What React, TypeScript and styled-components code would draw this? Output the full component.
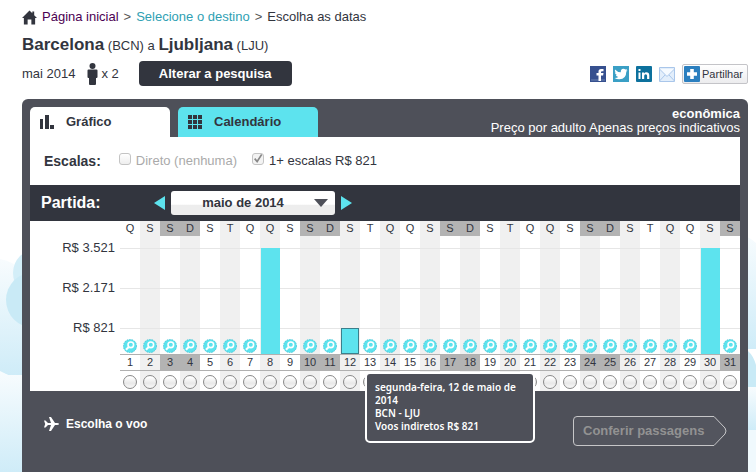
import React, { useState } from "react";
import styled, { createGlobalStyle, css } from "styled-components";

const ink = "#32353e";
const slate = "#4e5059";
const aqua = "#5de3ee";
const weekendGrey = "#b3b3b3";
const stripe = "#f0f0f0";

const GlobalStyle = createGlobalStyle`
  * { box-sizing: border-box; }
  html, body { margin: 0; height: 100%; overflow: hidden; }
  #root { min-height: 100%; height: 100%; }
  body {
    background: #fff;
    color: ${ink};
    font-family: "Liberation Sans", Arial, Helvetica, sans-serif;
    font-size: 13px;
    line-height: 16px;
  }
  button, input, select { font: inherit; color: inherit; margin: 0; }
  h1, h2, p { margin: 0; font: inherit; }
`;

const Page = styled.div`
  position: relative;
  min-height: 100%;
  padding: 0 8px 0 22px;
  display: flex;
  flex-direction: column;
`;

const CloudLayer = styled.svg<{ $side: "left" | "right" }>`
  position: absolute;
  top: 225px;
  ${(p) => p.$side}: 0;
`;

const Breadcrumb = styled.nav`
  display: flex;
  align-items: center;
  gap: 5px;
  padding-top: 9px;
  color: #555;
`;

const Crumb = styled.a<{ $tone: string }>`
  color: ${(p) => p.$tone};
  text-decoration: none;
`;

const Route = styled.h1`
  padding-top: 10px;
  line-height: 20px;
  strong { font-size: 17px; }
`;

const SearchBar = styled.div`
  display: flex;
  align-items: center;
  height: 25px;
  margin-top: 5px;
`;

const Passengers = styled.span`
  display: flex;
  align-items: center;
  gap: 3px;
  margin-left: 12px;
`;

const ChangeButton = styled.button`
  height: 25px;
  margin-left: 20px;
  padding: 0 20px;
  border: 0;
  border-radius: 4px;
  background: ${ink};
  color: #fff;
  font-weight: bold;
`;

const ShareTools = styled.div`
  display: flex;
  align-items: center;
  gap: 7px;
  margin-left: auto;
`;

const SocialLink = styled.a`
  display: flex;
`;

const ShareButton = styled.button`
  display: flex;
  align-items: center;
  gap: 2px;
  height: 20px;
  padding: 0 4px 0 1px;
  border: 1px solid #c4c4c8;
  border-radius: 2px;
  background: linear-gradient(#fff, #ececee);
  font-size: 11px;
`;

const Panel = styled.main`
  position: relative;
  flex: 1;
  margin-top: 13px;
  padding: 8px 8px 0;
  border-radius: 6px 6px 0 0;
  background: ${slate};
`;

const PanelHead = styled.div`
  display: flex;
  align-items: flex-start;
`;

const Tabs = styled.div`
  display: flex;
  gap: 8px;
`;

const Tab = styled.button<{ $active: boolean }>`
  display: flex;
  align-items: center;
  gap: 12px;
  width: 140px;
  height: 30px;
  padding: 0 10px;
  border: 0;
  border-radius: 5px 5px 0 0;
  background: ${(p) => (p.$active ? "#fff" : aqua)};
  font-weight: bold;
`;

const PriceNote = styled.p`
  margin-left: auto;
  color: #fff;
  line-height: 14px;
  text-align: right;
  strong { display: block; }
`;

const Stops = styled.fieldset`
  display: flex;
  align-items: center;
  height: 48px;
  margin: 0;
  padding: 0 14px;
  border: 0;
  background: #fff;
`;

const StopsTitle = styled.span`
  margin-right: 3px;
  font-size: 14px;
  font-weight: bold;
`;

const StopOption = styled.label<{ $muted?: boolean }>`
  display: flex;
  align-items: center;
  gap: 5px;
  margin-left: 15px;
  color: ${(p) => (p.$muted ? "#aaa" : ink)};
`;

const CheckInput = styled.input`
  appearance: none;
  align-self: flex-start;
  width: 12px;
  height: 12px;
  border: 1px solid #c4c4c4;
  border-radius: 3px;
  background: linear-gradient(#fff, #eee);
  &:checked {
    background: url("data:image/svg+xml,%3Csvg xmlns='http://www.w3.org/2000/svg' viewBox='0 0 12 12'%3E%3Cpath d='M2 5.5 5 9 10.5 0.5' fill='none' stroke='%23888' stroke-width='2'/%3E%3C/svg%3E") center / 100% no-repeat, #f3f3f3;
  }
`;

const Departure = styled.div`
  display: flex;
  align-items: center;
  height: 36px;
  padding: 0 11px;
  background: ${ink};
`;

const DepartureTitle = styled.h2`
  width: 113px;
  color: #fff;
  font-size: 16px;
  font-weight: bold;
`;

const StepButton = styled.button`
  display: flex;
  padding: 0;
  border: 0;
  background: none;
`;

const MonthBox = styled.div`
  display: grid;
  align-items: center;
  width: 164px;
  margin: 0 6px;
  & > * { grid-area: 1 / 1; }
  svg { justify-self: end; margin-right: 7px; pointer-events: none; }
`;

const MonthSelect = styled.select`
  appearance: none;
  width: 100%;
  height: 24px;
  padding: 0 20px 0 0;
  border: 0;
  border-radius: 3px;
  background: linear-gradient(#fff 0 55%, #ededed 60% 100%);
  font-weight: bold;
  text-align: center;
  text-align-last: center;
`;

const Chart = styled.section`
  display: grid;
  grid-template-columns: 90px 1fr;
  background: #fff;
`;

const PriceAxis = styled.div`
  display: flex;
  flex-direction: column;
  padding: 7px 5px 0 0;
  text-align: right;
`;

const PriceMark = styled.span`
  height: 40px;
  line-height: 40px;
`;

const Days = styled.div`
  display: grid;
  grid-template-columns: repeat(31, 1fr);
`;

const Day = styled.div`
  display: flex;
  flex-direction: column;
  font-size: 11px;
  text-align: center;
  &:nth-child(even) { background: ${stripe}; }
`;

const weekendFill = css<{ $weekend: boolean }>`
  ${(p) => p.$weekend && `background: ${weekendGrey};`}
`;

const WeekLetter = styled.span<{ $weekend: boolean }>`
  height: 15px;
  line-height: 15px;
  ${weekendFill}
`;

const Plot = styled.div`
  display: flex;
  align-items: flex-end;
  justify-content: center;
  height: 118px;
  background: linear-gradient(#e6e6e6 1px, transparent 1px) 0 12px / 100% 40px;
`;

const Bar = styled.button<{ $selected: boolean }>`
  width: 100%;
  margin-left: 1px;
  margin-right: ${(p) => (p.$selected ? "1px" : "0")};
  padding: 0;
  border: ${(p) => (p.$selected ? "1px solid #3b7f8c" : "0")};
  background: ${aqua};
`;

const SearchDay = styled.button`
  display: flex;
  padding: 0 0 1px;
  border: 0;
  background: none;
`;

const DayNumber = styled.span<{ $weekend: boolean }>`
  height: 17px;
  border: solid #b0b0b0;
  border-width: 1px 0;
  line-height: 15px;
  ${weekendFill}
`;

const DayChoice = styled.input`
  appearance: none;
  align-self: center;
  width: 14px;
  height: 14px;
  margin: 4px 0 2px;
  border: 1px solid #888;
  border-radius: 50%;
  background: linear-gradient(#fff 10%, #e8e8e8 60%, #f8f8f8);
`;

const Tooltip = styled.div`
  position: absolute;
  top: 273px;
  left: 343px;
  width: 170px;
  padding: 7px 8px 8px;
  border: 2px solid #fff;
  border-radius: 5px;
  background: ${slate};
  color: #fff;
  font-family: "Noto Sans", sans-serif;
  font-size: 10px;
  font-weight: 600;
  line-height: 13px;
`;

const PanelFoot = styled.footer`
  display: flex;
  align-items: flex-start;
  justify-content: space-between;
  padding: 25px 13px 0 14px;
`;

const FlightPick = styled.div`
  display: flex;
  align-items: center;
  gap: 7px;
  color: #fff;
  font-size: 12px;
  font-weight: bold;
`;

const CheckFares = styled.button`
  display: grid;
  align-items: center;
  padding: 0;
  border: 0;
  background: none;
  color: #929292;
  font-weight: bold;
  & > * { grid-area: 1 / 1; }
  span { justify-self: start; padding-left: 10px; }
`;

const HomeIcon = () => (
  <svg width="15" height="15" viewBox="0 0 16 15" fill={ink} aria-hidden="true">
    <path d="M8 0 0 8h2v7h4V9.500h4V15h4V8h2L13 5V1h-2v2z" />
  </svg>
);

const PersonIcon = () => (
  <svg width="11" height="22" viewBox="0 0 11 22" fill={ink} aria-hidden="true">
    <circle cx="5.500" cy="3" r="3" />
    <path d="M1.500 6.500h8q1 0 1 1V14q0 1-1 1H9v6q0 1-1 1H3q-1 0-1-1v-6h-.5q-1 0-1-1V7.500q0-1 1-1z" />
  </svg>
);

const FacebookIcon = () => (
  <svg width="16" height="16" viewBox="0 0 16 16" aria-hidden="true">
    <rect width="16" height="16" fill="#36508f" />
    <path d="M1 14h14" stroke="#6d84b4" />
    <path d="M8.500 15V9.500H6.500V7h2V5.500Q8.500 3 11 3h2.500v2.300H12q-1 0-1 1V7h2.500l-.4 2.500H11V15z" fill="#fff" />
  </svg>
);

const TwitterIcon = () => (
  <svg width="16" height="16" viewBox="0 0 16 16" aria-hidden="true">
    <rect width="16" height="16" fill="#3a9fc5" />
    <path d="M2 3.500Q4.500 6.300 7.800 6.300 7.500 3 10.400 2.800q1.300 0 2 .8L14 3l-.8 1.500L14.500 4.300 13.300 5.700Q13.300 12.800 6.500 13.300 3.700 13.400 1.500 12q2.400.1 3.800-1.100Q3.300 10.600 2.800 9h1.200Q2 8.200 1.900 6.200l1.100.3Q1.200 5.300 2 3.500z" fill="#fff" />
  </svg>
);

const LinkedInIcon = () => (
  <svg width="16" height="16" viewBox="0 0 16 16" aria-hidden="true">
    <rect width="16" height="16" rx="1" fill="#0d719d" />
    <path d="M2.500 6.500h2V13h-2zM2.500 3h2v2h-2zM6 6.500h2v1q.8-1.200 2.300-1.200 3 0 3 3.200V13h-2.200V9.700q0-1.500-1.400-1.500-1.500 0-1.500 1.600V13H6z" fill="#fff" />
  </svg>
);

const MailIcon = () => (
  <svg width="16" height="16" viewBox="0 0 16 16" fill="#e2eefb" stroke="#a9c6ea" aria-hidden="true">
    <path d="M.5 1.500h15v14H.5z" />
    <path d="m.5 15 5.500-6m9.500 6L10 9" />
    <path d="M.5 3 8 10.500 15.500 3" fill="#f5faff" />
  </svg>
);

const PlusIcon = () => (
  <svg width="16" height="16" viewBox="0 0 16 16" aria-hidden="true">
    <rect width="16" height="16" rx="1" fill="#2b7fbf" />
    <path d="M6.200 3h3.600v3.200H13v3.600H9.800V13H6.200V9.800H3V6.200h3.200z" fill="#fff" />
  </svg>
);

const BarsIcon = () => (
  <svg width="14" height="14" viewBox="0 0 14 14" fill={ink} aria-hidden="true">
    <path d="M0 4h3v10H0zM5 0h4v14H5zM10 10h4v4h-4z" />
  </svg>
);

const GridIcon = () => (
  <svg width="14" height="14" viewBox="0 0 14 14" fill={ink} aria-hidden="true">
    <path d="M0 0h4v4H0zM5 0h4v4H5zM10 0h4v4h-4zM0 5h4v4H0zM5 5h4v4H5zM10 5h4v4h-4zM0 10h4v4H0zM5 10h4v4H5zM10 10h4v4h-4z" />
  </svg>
);

const StepIcon = ({ back }: { back?: boolean }) => (
  <svg width="11" height="14" viewBox="0 0 11 14" fill={aqua} aria-hidden="true">
    <path d={back ? "M11 0v14L0 7z" : "M0 0v14l11-7z"} />
  </svg>
);

const MagnifierIcon = () => (
  <svg width="14" height="14" viewBox="0 0 14 14" aria-hidden="true">
    <circle cx="7" cy="7" r="6.600" fill={aqua} stroke="#3cc0d2" strokeWidth=".8" strokeDasharray="1.500 1" />
    <circle cx="7.800" cy="5.800" r="2.800" fill="none" stroke="#fff" strokeWidth="1.600" />
    <path d="M5.700 8 3 10.800" stroke="#fff" strokeWidth="2" />
  </svg>
);

const PlaneIcon = () => (
  <svg width="15" height="16" viewBox="0 0 15 16" fill="#fff" aria-hidden="true">
    <path d="M0 4.500h1.500L4 7h3L5 1h2l4 6h2q2 .2 2 1t-2 1h-2l-4 6H5l2-6H4l-2.500 2.500H0L1.200 8z" />
  </svg>
);

const WEEK = ["Q", "S", "S", "D", "S", "T", "Q"];
const BAR_HEIGHTS: Record<number, number> = { 8: 106, 12: 26, 30: 106 };
const days = Array.from({ length: 31 }, (_, i) => ({
  day: i + 1,
  letter: WEEK[i % 7],
  weekend: i % 7 === 2 || i % 7 === 3,
  bar: BAR_HEIGHTS[i + 1],
}));

const Clouds = () => (
  <>
    <CloudLayer $side="left" width="40" height="247" aria-hidden="true">
      <defs>
        <linearGradient id="haze" x1="0" y1="0" x2="0" y2="1">
          <stop offset="0" stopColor="#f8fcfe" />
          <stop offset="1" stopColor="#cfecf8" />
        </linearGradient>
      </defs>
      <path d="M0 34q14 2 25 15h15v101H8L0 147z" fill="url(#haze)" />
      <circle cx="37" cy="48" r="24" fill="#d3eef8" />
      <circle cx="34" cy="75" r="28" fill="#c9eaf6" />
      <path d="M0 146l8 4h32v97H0z" fill="url(#haze)" />
    </CloudLayer>
    <CloudLayer $side="right" width="20" height="247" aria-hidden="true">
      <path d="M0 8q14 4 20 10v106H0z" fill="url(#haze)" />
      <path d="M0 122q15 0 20 18v22H0z" fill="#c9eaf6" />
      <path d="M0 162h20v43H0z" fill="url(#haze)" />
      <path d="M0 205h20v42H0z" fill="#f0f9fd" />
    </CloudLayer>
  </>
);

export default function App() {
  const [tab, setTab] = useState("chart");
  const [direct, setDirect] = useState(false);
  const [stops, setStops] = useState(true);
  return (
    <>
      <GlobalStyle />
      <Page>
        <Clouds />
        <Breadcrumb aria-label="Navegação">
          <HomeIcon />
          <Crumb href="#inicio" $tone="#4b0052">Página inicial</Crumb>
          <span>&gt;</span>
          <Crumb href="#destino" $tone="#2f9fb3">Selecione o destino</Crumb>
          <span>&gt;</span>
          <Crumb as="span" $tone={ink}>Escolha as datas</Crumb>
        </Breadcrumb>
        <Route>
          <strong>Barcelona</strong> (BCN) a <strong>Ljubljana</strong> (LJU)
        </Route>
        <SearchBar>
          <span>mai 2014</span>
          <Passengers><PersonIcon />x 2</Passengers>
          <ChangeButton type="button">Alterar a pesquisa</ChangeButton>
          <ShareTools>
            <SocialLink href="#facebook" aria-label="Facebook"><FacebookIcon /></SocialLink>
            <SocialLink href="#twitter" aria-label="Twitter"><TwitterIcon /></SocialLink>
            <SocialLink href="#linkedin" aria-label="LinkedIn"><LinkedInIcon /></SocialLink>
            <SocialLink href="#email" aria-label="E-mail"><MailIcon /></SocialLink>
            <ShareButton type="button"><PlusIcon />Partilhar</ShareButton>
          </ShareTools>
        </SearchBar>
        <Panel>
          <PanelHead>
            <Tabs>
              <Tab type="button" $active={tab === "chart"} onClick={() => setTab("chart")}><BarsIcon />Gráfico</Tab>
              <Tab type="button" $active={tab === "calendar"} onClick={() => setTab("calendar")}><GridIcon />Calendário</Tab>
            </Tabs>
            <PriceNote><strong>econômica</strong>Preço por adulto Apenas preços indicativos</PriceNote>
          </PanelHead>
          <Stops aria-label="Escalas">
            <StopsTitle>Escalas:</StopsTitle>
            <StopOption $muted>
              <CheckInput type="checkbox" checked={direct} onChange={() => setDirect(!direct)} />
              Direto (nenhuma)
            </StopOption>
            <StopOption>
              <CheckInput type="checkbox" checked={stops} onChange={() => setStops(!stops)} />
              1+ escalas R$ 821
            </StopOption>
          </Stops>
          <Departure>
            <DepartureTitle>Partida:</DepartureTitle>
            <StepButton type="button" aria-label="Mês anterior"><StepIcon back /></StepButton>
            <MonthBox>
              <MonthSelect aria-label="Mês de partida"><option>maio de 2014</option></MonthSelect>
              <svg width="14" height="8" viewBox="0 0 14 8" fill={slate} aria-hidden="true"><path d="M0 0h14L7 8z" /></svg>
            </MonthBox>
            <StepButton type="button" aria-label="Próximo mês"><StepIcon /></StepButton>
          </Departure>
          <Chart>
            <PriceAxis>
              <PriceMark>R$ 3.521</PriceMark>
              <PriceMark>R$ 2.171</PriceMark>
              <PriceMark>R$ 821</PriceMark>
            </PriceAxis>
            <Days>
              {days.map(({ day, letter, weekend, bar }) => (
                <Day key={day}>
                  <WeekLetter $weekend={weekend}>{letter}</WeekLetter>
                  <Plot>
                    {bar ? (
                      <Bar type="button" $selected={day === 12} style={{ height: bar }} aria-label={`Preço do dia ${day}`} />
                    ) : (
                      <SearchDay type="button" aria-label={`Pesquisar dia ${day}`}><MagnifierIcon /></SearchDay>
                    )}
                  </Plot>
                  <DayNumber $weekend={weekend}>{day}</DayNumber>
                  <DayChoice type="radio" name="departure-day" aria-label={`Dia ${day}`} />
                </Day>
              ))}
            </Days>
          </Chart>
          <PanelFoot>
            <FlightPick><PlaneIcon />Escolha o voo</FlightPick>
            <CheckFares type="button">
              <svg width="154" height="30" viewBox="0 0 154 30" fill="#53555e" stroke="#c6c6c8" aria-hidden="true">
                <path d="M4 .5h137l11 11.500q2 3 0 6L141 29.500H4q-3.500 0-3.500-3.500V4Q.5.500 4 .5z" />
              </svg>
              <span>Conferir passagens</span>
            </CheckFares>
          </PanelFoot>
          <Tooltip role="tooltip">
            segunda-feira, 12 de maio de 2014<br />BCN - LJU<br />Voos indiretos R$ 821
          </Tooltip>
        </Panel>
      </Page>
    </>
  );
}
